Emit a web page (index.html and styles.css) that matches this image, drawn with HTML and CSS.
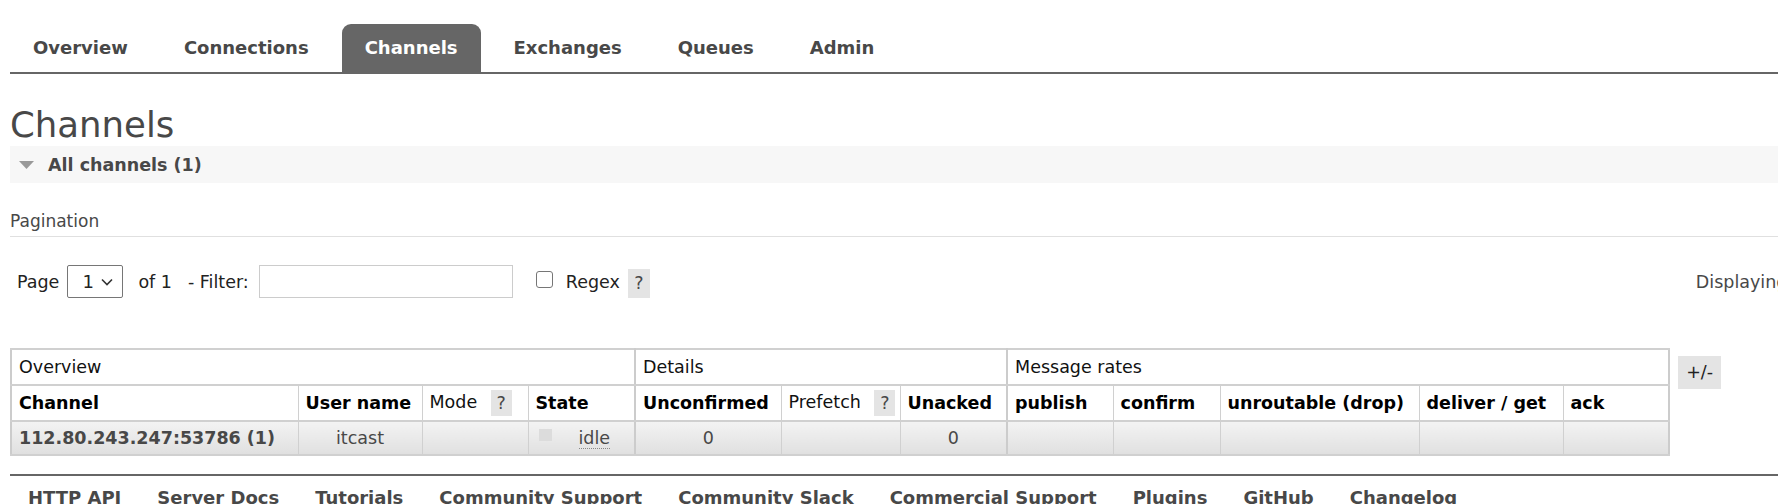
FILE: index.html
```html
<!DOCTYPE html>
<html>
<head>
<meta charset="utf-8">
<title>RabbitMQ Management - Channels</title>
<link rel="stylesheet" href="styles.css">
</head>
<body>
<div class="page">
  <nav class="menu">
    <ul>
      <li><a>Overview</a></li>
      <li><a>Connections</a></li>
      <li><a class="active">Channels</a></li>
      <li><a>Exchanges</a></li>
      <li><a>Queues</a></li>
      <li><a>Admin</a></li>
    </ul>
  </nav>

  <h1 class="title">Channels</h1>

  <div class="section-h">
    <svg class="tri" width="15" height="8" viewBox="0 0 15 8"><polygon points="0,0 15,0 7.5,8" fill="#999"/></svg>
    <span>All channels (1)</span>
  </div>

  <h3 class="pag-title">Pagination</h3>

  <div class="pag-row">
    <span class="lbl-page">Page</span>
    <span class="sel-wrap">
      <select class="sel"><option>1</option></select>
      <svg class="chev" width="12" height="8" viewBox="0 0 12 8"><polyline points="1,1.5 6,6.5 11,1.5" fill="none" stroke="#333" stroke-width="1.6"/></svg>
    </span>
    <span class="lbl-of">of 1</span>
    <span class="lbl-filter">- Filter:</span>
    <input class="filter" type="text">
    <input class="chk" type="checkbox">
    <span class="lbl-regex">Regex</span>
    <span class="help">?</span>
    <span class="displaying">Displaying 1 item , page size up to: 100</span>
  </div>

  <div class="table-row">
    <table class="list">
      <colgroup>
        <col class="w-chan"><col class="w-user"><col class="w-mode"><col class="w-state">
        <col class="w-unconf"><col class="w-pref"><col class="w-unack">
        <col class="w-pub"><col class="w-conf"><col class="w-unr"><col class="w-deliv"><col class="w-ack">
      </colgroup>
      <thead>
        <tr class="grp">
          <th colspan="4" class="gsep">Overview</th>
          <th colspan="3" class="gsep">Details</th>
          <th colspan="5">Message rates</th>
        </tr>
        <tr class="cols">
          <th>Channel</th>
          <th>User name</th>
          <th class="light">Mode <span class="help sm">?</span></th>
          <th class="gsep">State</th>
          <th>Unconfirmed</th>
          <th class="light">Prefetch <span class="help sm">?</span></th>
          <th class="gsep">Unacked</th>
          <th>publish</th>
          <th>confirm</th>
          <th>unroutable (drop)</th>
          <th>deliver / get</th>
          <th>ack</th>
        </tr>
      </thead>
      <tbody>
        <tr class="data">
          <td class="strong">112.80.243.247:53786 (1)</td>
          <td class="c">itcast</td>
          <td></td>
          <td class="gsep state"><span class="sq"></span><abbr class="idle">idle</abbr></td>
          <td class="c">0</td>
          <td></td>
          <td class="c gsep">0</td>
          <td></td>
          <td></td>
          <td></td>
          <td></td>
          <td></td>
        </tr>
      </tbody>
    </table>
    <span class="plusminus">+/-</span>
  </div>

  <footer class="foot">
    <ul>
      <li><a>HTTP API</a></li>
      <li><a>Server Docs</a></li>
      <li><a>Tutorials</a></li>
      <li><a>Community Support</a></li>
      <li><a>Community Slack</a></li>
      <li><a>Commercial Support</a></li>
      <li><a>Plugins</a></li>
      <li><a>GitHub</a></li>
      <li><a>Changelog</a></li>
    </ul>
  </footer>
</div>
</body>
</html>
```

FILE: styles.css
```css
html, body {
  margin: 0;
  padding: 0;
  overflow: hidden;
  background: #fff;
}

body {
  font-family: "DejaVu Sans", Verdana, sans-serif;
  font-size: 17.5px;
  color: #484848;
}

.page {
  padding-left: 10px;
  width: 2200px;
}

/* top menu */
.menu ul {
  display: flex;
  gap: 10px;
  list-style: none;
  margin: 24px 0 0 0;
  padding: 0;
  border-bottom: 2px solid #666;
}

.menu a {
  display: block;
  padding: 0 23px;
  line-height: 48px;
  font-size: 18px;
  font-weight: bold;
  color: #484848;
}

.menu a.active {
  background: #666;
  color: #fff;
  border-radius: 9px 9px 0 0;
}

/* heading */
.title {
  margin: 30px 0 0 0;
  font-size: 35.5px;
  line-height: 42px;
  font-weight: normal;
  color: #484848;
}

.section-h {
  display: flex;
  align-items: center;
  height: 37px;
  background: #f7f7f7;
  padding-left: 9px;
  font-weight: bold;
  color: #484848;
}

.tri {
  margin-right: 14px;
}

.pag-title {
  margin: 28px 0 0 0;
  font-size: 17px;
  font-weight: normal;
  line-height: 20px;
  padding-bottom: 5px;
  border-bottom: 1px solid #e0e0e0;
  color: #484848;
}

/* pagination row */
.pag-row {
  display: flex;
  align-items: center;
  height: 33px;
  margin-top: 28px;
  color: #222;
}

.lbl-page { margin-left: 7px; }

.sel-wrap {
  position: relative;
  display: inline-block;
  margin-left: 8px;
  width: 56px;
  height: 33px;
}

.sel {
  appearance: none;
  -webkit-appearance: none;
  width: 56px;
  height: 33px;
  box-sizing: border-box;
  border: 1px solid #767676;
  border-radius: 2px;
  background: #fff;
  font-family: "DejaVu Sans", Verdana, sans-serif;
  font-size: 18px;
  color: #222;
  padding: 0 0 0 14px;
  margin: 0;
}

.chev {
  position: absolute;
  right: 10px;
  top: 13px;
  pointer-events: none;
}

.lbl-of { margin-left: 15px; }
.lbl-filter { margin-left: 16px; }

.filter {
  margin: -1px 0 0 10px;
  width: 254px;
  height: 33px;
  box-sizing: border-box;
  border: 1px solid #ccc;
  padding: 0;
}

.chk {
  appearance: none;
  -webkit-appearance: none;
  margin: -4px 0 0 23px;
  width: 17px;
  height: 17px;
  box-sizing: border-box;
  border: 1px solid #767676;
  border-radius: 3px;
  background: #fff;
}

.lbl-regex { margin-left: 13px; }

.help {
  display: inline-block;
  background: #e4e4e4;
  color: #484848;
  text-align: center;
}

.pag-row .help {
  margin-left: 8px;
  width: 22px;
  height: 29px;
  line-height: 29px;
  margin-top: 4px;
}

.displaying {
  margin-left: 1046px;
  color: #484848;
  white-space: nowrap;
}

/* table */
.table-row {
  display: flex;
  align-items: flex-start;
  gap: 8px;
  margin-top: 50px;
}

.list {
  border-collapse: collapse;
  table-layout: fixed;
  width: 1658px;
  border: 2px solid #ccc;
  color: #000;
}

.w-chan { width: 287px; }
.w-user { width: 124px; }
.w-mode { width: 106px; }
.w-state { width: 107px; }
.w-unconf { width: 146px; }
.w-pref { width: 119px; }
.w-unack { width: 107px; }
.w-pub { width: 106px; }
.w-conf { width: 107px; }
.w-unr { width: 199px; }
.w-deliv { width: 144px; }
.w-ack { width: 106px; }

.list th, .list td {
  border-top: 2px solid #d0d0d0;
  border-bottom: 2px solid #d0d0d0;
  border-left: 1px solid #d0d0d0;
  border-right: 1px solid #d0d0d0;
  padding: 0 7px;
  height: 34px;
  text-align: left;
  white-space: nowrap;
  overflow: hidden;
  font-size: 17.5px;
}

.list tr.data td {
  height: 32px;
}

.list .gsep {
  border-right: 2px solid #ccc;
}

.list tr.grp th {
  font-weight: normal;
  color: #111;
}

.list tr.cols th {
  font-weight: bold;
  color: #000;
}

.list tr.cols th.light {
  font-weight: normal;
  color: #111;
}

.help.sm {
  width: 21px;
  height: 26px;
  line-height: 26px;
  margin-left: 8px;
  vertical-align: middle;
  font-weight: normal;
}

.list tr.data td {
  background: linear-gradient(#f3f3f3, #e0e0e0);
  color: #484848;
}

.list td.strong {
  font-weight: bold;
  color: #000;
}

.list td.c {
  text-align: center;
}

.list td.state {
  padding-left: 10px;
}

.sq {
  display: inline-block;
  width: 13px;
  height: 12px;
  background: #dcdcdc;
  vertical-align: middle;
  margin-top: -8px;
}

.idle {
  margin-left: 27px;
  text-decoration: none;
  border-bottom: 1px dotted #888;
}

.plusminus {
  margin-top: 8px;
  width: 43px;
  height: 33px;
  line-height: 33px;
  text-align: center;
  background: #e4e4e4;
  color: #222;
}

/* footer */
.foot {
  margin-top: 18px;
  border-top: 2px solid #666;
}

.foot ul {
  display: flex;
  list-style: none;
  margin: 0;
  padding: 11px 0 0 0;
}

.foot a {
  display: block;
  padding: 0 18px;
  font-size: 18px;
  font-weight: bold;
  line-height: 22px;
  color: #484848;
}
```
